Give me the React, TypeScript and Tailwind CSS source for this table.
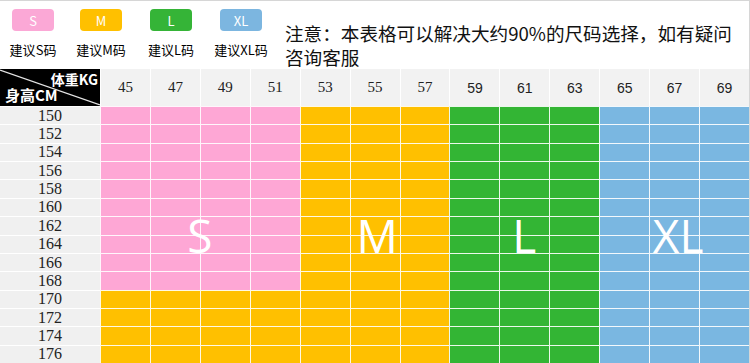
import React from "react";

const cols = [45, 47, 49, 51, 53, 55, 57, 59, 61, 63, 65, 67, 69];
const rows = [150, 152, 154, 156, 158, 160, 162, 164, 166, 168, 170, 172, 174, 176];

function cellColor(ci: number, ri: number): string {
  if (ci < 4) return ri < 10 ? "bg-[#fea7d5]" : "bg-[#ffc000]";
  if (ci < 7) return "bg-[#ffc000]";
  if (ci < 10) return "bg-[#33b534]";
  return "bg-[#7ab7e1]";
}

const legend = [
  { k: "S", bg: "bg-[#fba8d6]", w: "w-[66px]" },
  { k: "M", bg: "bg-[#ffc000]", w: "w-[70px]" },
  { k: "L", bg: "bg-[#35b437]", w: "w-[70px]" },
  { k: "XL", bg: "bg-[#7cb6e0]", w: "w-[70px]" },
];

export default function App() {
  return (
    <div
      className="w-[750px] h-[363px] overflow-hidden bg-white border-t border-r border-[#d6d6d6] flex flex-col"
      style={{ fontFamily: '"Noto Sans CJK SC", "Noto Sans", sans-serif' }}
    >
      {/* top */}
      <div className="h-[68px] flex shrink-0">
        <div className="flex pt-[8px]">
          {legend.map((l) => (
            <div key={l.k} className={`${l.w} flex flex-col items-center`}>
              <div
                className={`${l.bg} w-[42px] h-[22px] rounded-[4px] flex items-center justify-center text-white text-[13px] leading-none`}
              >
                {l.k}
              </div>
              <div className="mt-[10px] text-[13px] leading-[17px] text-black whitespace-nowrap">
                建议{l.k}码
              </div>
            </div>
          ))}
        </div>
        <div className="ml-[9px] pt-[20px] w-[456px] text-[18.6px] leading-[24px] text-[#111]">
          注意：本表格可以解决大约90%的尺码选择，如有疑问咨询客服
        </div>
      </div>

      {/* table */}
      <div className="relative h-[294px] shrink-0 flex flex-col">
        {/* header row */}
        <div className="h-[37px] grid grid-cols-[100px_repeat(13,minmax(0,1fr))] shrink-0">
          <div className="relative bg-black text-white">
            <svg className="absolute inset-0" width="100" height="37">
              <line x1="0" y1="1" x2="100" y2="36" stroke="#e5e5e5" strokeWidth="1.2" />
            </svg>
            <div className="absolute right-[2px] top-[2px] text-[14px] leading-[16px] font-bold">
              体重KG
            </div>
            <div className="absolute left-[5px] top-[17px] text-[15px] leading-[17px] font-bold">
              身高CM
            </div>
          </div>
          {cols.map((c, i) => (
            <div
              key={c}
              className={`bg-[#f2f2f2] border-l border-white flex items-center justify-center text-[#222] leading-none ${
                i < 7 ? "text-[15px]" : "text-[14px]"
              }`}
              style={{
                fontFamily:
                  i < 7 ? '"Liberation Serif", serif' : '"Liberation Sans", Arial, sans-serif',
              }}
            >
              {c}
            </div>
          ))}
        </div>

        {/* body */}
        <div className="h-[257px] shrink-0 grid grid-cols-[100px_repeat(13,minmax(0,1fr))] grid-rows-[repeat(14,minmax(0,1fr))]">
          {rows.map((r, ri) => (
            <React.Fragment key={r}>
              <div
                className="bg-[#f0f0f0] border-t border-white flex items-center justify-center text-[16px] leading-none text-[#222] overflow-hidden"
                style={{ fontFamily: '"Liberation Serif", serif' }}
              >
                {r}
              </div>
              {cols.map((c, ci) => (
                <div
                  key={c}
                  className={`${cellColor(ci, ri)} border-t border-l border-white/90`}
                />
              ))}
            </React.Fragment>
          ))}
        </div>

        {/* big size letters */}
        <div
          className="absolute left-[100px] right-0 top-[37px] h-[257px] flex items-center text-white text-[46px] leading-none pointer-events-none"
          style={{ fontFamily: '"Open Sans", sans-serif' }}
        >
          <div className="w-[200px] text-center">S</div>
          <div className="w-[150px] text-center pl-[5px]">M</div>
          <div className="w-[150px] text-center">L</div>
          <div className="w-[150px] text-center pl-[8px]">XL</div>
        </div>
      </div>
    </div>
  );
}
